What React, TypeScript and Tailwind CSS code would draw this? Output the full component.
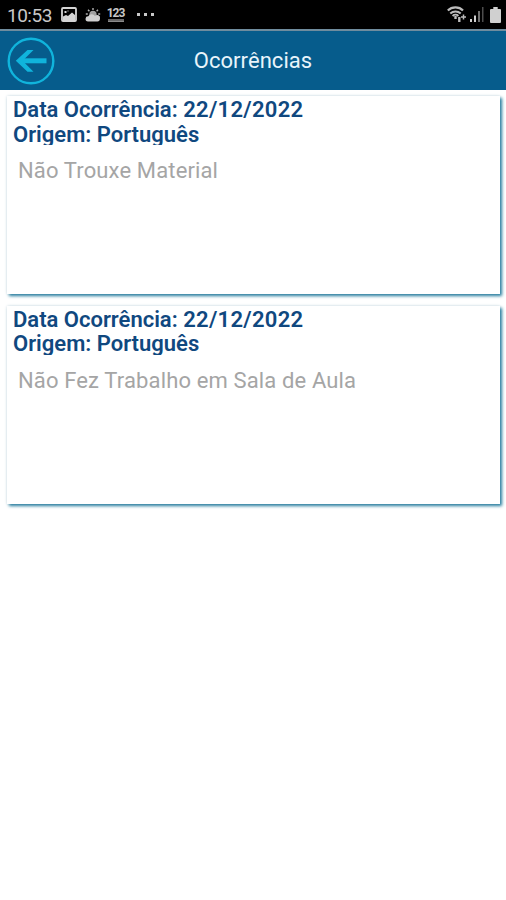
const occurrences = [
  { date: "22/12/2022", subject: "Português", note: "Não Trouxe Material" },
  { date: "22/12/2022", subject: "Português", note: "Não Fez Trabalho em Sala de Aula" },
];

function PictureIcon() {
  return (
    <svg width="16" height="15" viewBox="0 0 16 15" fill="none">
      <rect x="1" y="1" width="14" height="13" rx="1" stroke="#d4d4d4" strokeWidth="1.8" />
      <path d="M2 13V9.500l3-1.500 2 1 4-3.500 3 2.500V13z" fill="#d4d4d4" />
      <path d="M3.500 4h2v2h-2zM6.500 3.500h1v1h-1z" fill="#d4d4d4" />
    </svg>
  );
}

function WeatherIcon() {
  return (
    <svg width="16" height="14" viewBox="0 0 16 14" fill="none">
      <path d="M8 0v2M3 1.8l1.4 1.5M13 1.8l-1.4 1.5M.8 6h2M13.200 6h2" stroke="#b0b0b0" strokeWidth="1.400" />
      <circle cx="8" cy="6.300" r="3.600" fill="#a0a0a0" />
      <path d="M3 13.500a2.600 2.600 0 0 1 .3-5.200A3.800 3.800 0 0 1 10 8a2.900 2.900 0 0 1 5 2.600c0 1.800-1 2.900-2.500 2.900z" fill="#d0d0d0" />
    </svg>
  );
}

function WifiIcon() {
  return (
    <svg width="20" height="17" viewBox="0 0 20 17" fill="none" stroke="#bcbcbc">
      <path d="M.8 4.500C5 .4 12 .4 16 4.500" strokeWidth="2.200" />
      <path d="M3.300 7.500c2.900-2.800 7.500-2.800 10.400 0" strokeWidth="2" />
      <path d="M5.600 10c1.700-1.600 4.200-1.600 5.800 0" strokeWidth="1.900" />
      <path d="M8.500 10v3" strokeWidth="2.400" />
      <path d="M12.300 11v5" strokeWidth="2.400" />
      <path d="M16.500 8.500v5M14 11h5" strokeWidth="1.500" />
    </svg>
  );
}

function SignalIcon() {
  return (
    <svg width="14" height="15" viewBox="0 0 14 15">
      <path d="M0 12h2v3H0zM4 8.500h2V15H4z" fill="#d0d0d0" />
      <path d="M8 4h2v11H8z" fill="#707070" />
      <path d="M12 0h1.500v15H12z" fill="#4d4d4d" />
    </svg>
  );
}

function BatteryIcon() {
  return (
    <svg width="11" height="16" viewBox="0 0 11 16">
      <path d="M3.300 0h4.400v2H10a1 1 0 0 1 1 1v12a1 1 0 0 1-1 1H1a1 1 0 0 1-1-1V3a1 1 0 0 1 1-1h2.300z" fill="#d0d0d0" />
    </svg>
  );
}

function StatusBar() {
  return (
    <div className="flex h-[29px] items-start bg-black pl-[7px] pr-[5px] text-[#c8c8c8]">
      <span className="w-[54px] pt-[5px] text-[19px] leading-[22px] tracking-[-0.5px]">10:53</span>
      <div className="pt-[7px]">
        <PictureIcon />
      </div>
      <div className="ml-2 pt-2">
        <WeatherIcon />
      </div>
      <div className="ml-[6px] flex w-[17px] flex-col items-center pt-2">
        <span className="text-[12px] font-bold leading-[10px] tracking-[-1px]">123</span>
        <span className="mt-px h-[3px] w-4 border-b border-[#8b8b8b] bg-[#686868]" />
      </div>
      <div className="ml-[13px] flex gap-[4px] pt-[13px]">
        <span className="size-[3px] bg-[#c8c8c8]" />
        <span className="size-[3px] bg-[#c8c8c8]" />
        <span className="size-[3px] bg-[#c8c8c8]" />
      </div>
      <div className="ml-auto flex items-start">
        <div className="pt-[6px]">
          <WifiIcon />
        </div>
        <div className="ml-[3px] pt-[7px]">
          <SignalIcon />
        </div>
        <div className="ml-[6px] pt-[7px]">
          <BatteryIcon />
        </div>
      </div>
    </div>
  );
}

function Header() {
  return (
    <header className="grid h-[61px] grid-cols-[60px_1fr_60px] items-center border-t-2 border-[#6f8c9e] bg-[#065c8c]">
      <button className="ml-[7px] w-12" aria-label="Voltar">
        <svg width="48" height="48" viewBox="0 0 48 48" fill="none" stroke="#10b4dc">
          <circle cx="24" cy="24" r="22.300" strokeWidth="2.400" />
          <path d="M39.500 23.800H13" strokeWidth="5" />
          <path d="M26.500 13h-6L8.800 23.800l11.700 10.900h6L15.600 23.800z" fill="#10b4dc" stroke="none" />
        </svg>
      </button>
      <h1 className="text-center text-[22px] leading-6 tracking-[0.05px] text-[#e8f4fb]">Ocorrências</h1>
    </header>
  );
}

function OccurrenceCard({ date, subject, note }: { date: string; subject: string; note: string }) {
  return (
    <article className="h-[198px] bg-white pl-[6px] shadow-[2px_2px_3px_#287e9f,0_0_3px_#d7e2e7]">
      <div className="h-[49px] overflow-hidden pt-[2px] text-[22px] font-semibold leading-[24.500px] text-[#10487f]">
        <p>
          Data Ocorrência: <span className="tracking-[0.3px]">{date}</span>
        </p>
        <p>Origem: {subject}</p>
      </div>
      <p className="pl-[5px] pt-[13px] text-[22px] leading-[26px] tracking-[0.140px] text-[#a5a5a5]">{note}</p>
    </article>
  );
}

export default function App() {
  return (
    <div className="min-h-screen bg-white font-['Roboto',sans-serif]">
      <StatusBar />
      <Header />
      <main className="flex flex-col gap-[11.500px] pl-[7px] pr-[6px] pt-[6px]">
        {occurrences.map((item) => (
          <OccurrenceCard key={item.note} {...item} />
        ))}
      </main>
    </div>
  );
}
